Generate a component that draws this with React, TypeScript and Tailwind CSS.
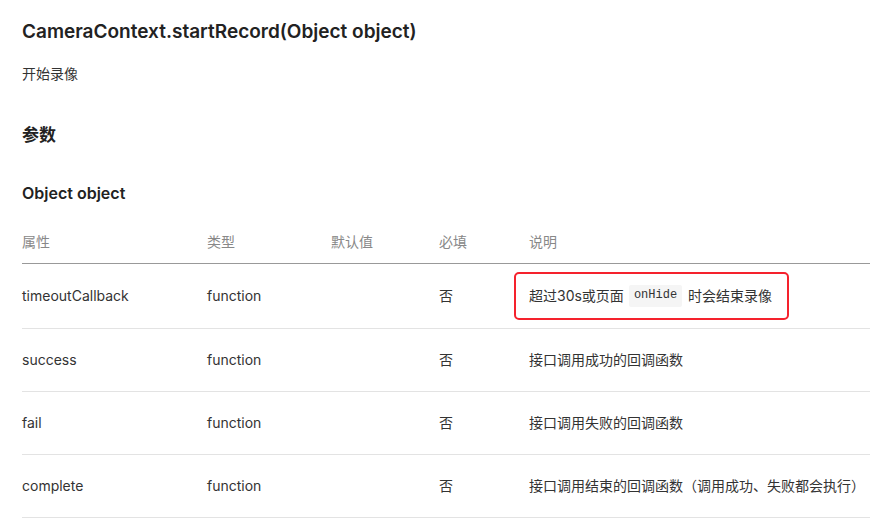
import React from "react";

const rows = [
  { name: "timeoutCallback", type: "function", def: "", req: "否", desc: "timeout" },
  { name: "success", type: "function", def: "", req: "否", desc: "接口调用成功的回调函数" },
  { name: "fail", type: "function", def: "", req: "否", desc: "接口调用失败的回调函数" },
  { name: "complete", type: "function", def: "", req: "否", desc: "接口调用结束的回调函数（调用成功、失败都会执行）" },
];

const cols = "grid grid-cols-[185px_124px_108px_90px_1fr]";

const App = () => {
  return (
    <div
      className="w-[870px] h-[532px] bg-white overflow-hidden pl-[22px] pt-[18px] text-[#333]"
      style={{ fontFamily: 'Inter, "Noto Sans CJK SC", sans-serif' }}
    >
      <h1 className="text-[19px] leading-[28px] font-semibold text-[#222]">
        CameraContext.startRecord(Object object)
      </h1>
      <p className="mt-[17px] text-sm leading-[22px]">开始录像</p>
      <h2 className="mt-[38px] text-[17px] leading-[24px] font-bold text-[#222]">参数</h2>
      <h3 className="mt-[34px] text-base leading-[24px] font-semibold text-[#222]">Object object</h3>

      <div className="mt-[16px]">
        <div className={`${cols} h-[43px] items-center border-b border-[#999] text-sm text-[#888]`}>
          <div>属性</div>
          <div>类型</div>
          <div>默认值</div>
          <div>必填</div>
          <div>说明</div>
        </div>
        {rows.map((r, i) => (
          <div
            key={r.name}
            className={`${cols} ${i === 0 ? "h-[65px]" : "h-[63px]"} items-center border-b border-[#e3e3e3] text-sm`}
          >
            <div>{r.name}</div>
            <div>{r.type}</div>
            <div>{r.def}</div>
            <div>{r.req}</div>
            <div>
              {r.desc === "timeout" ? (
                <div className="-ml-[15px] inline-flex items-center w-[275px] h-[48px] pl-[13px] border-2 border-[#f5222d] rounded-[5px]">
                  超过30s或页面
                  <code
                    className="ml-[5px] mr-[6px] px-[5px] h-[22px] flex items-center bg-[#f5f5f5] rounded-[2px] text-[12px]"
                    style={{ fontFamily: '"Liberation Mono", monospace' }}
                  >
                    onHide
                  </code>
                  时会结束录像
                </div>
              ) : (
                r.desc
              )}
            </div>
          </div>
        ))}
      </div>
    </div>
  );
};

export default App;
